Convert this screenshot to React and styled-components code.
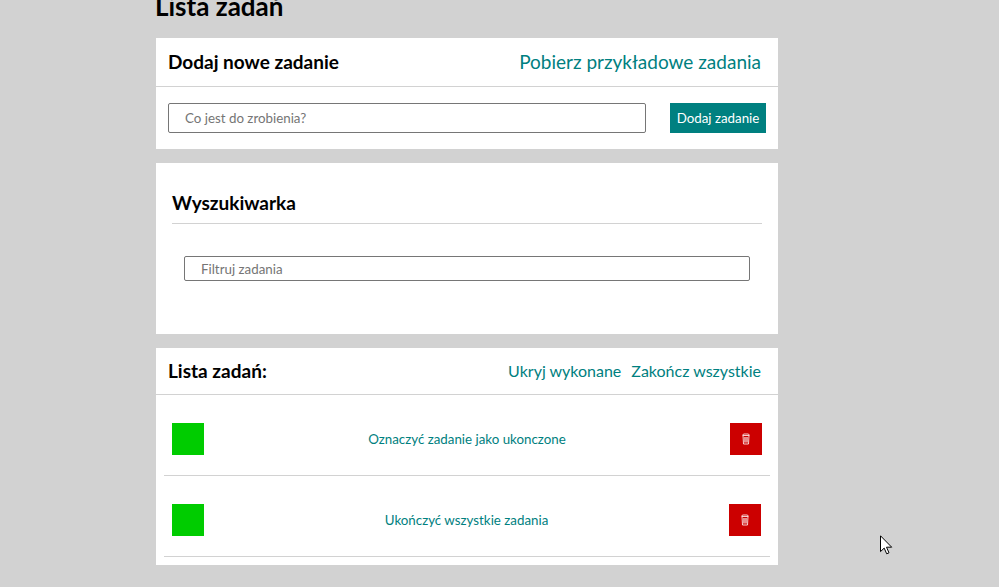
import React from 'react';
import styled, { createGlobalStyle } from 'styled-components';

const GlobalStyle = createGlobalStyle`
  *, *::before, *::after { box-sizing: border-box; }
  html { height: 100%; overflow: hidden; background: #d2d2d2; }
  body { margin: 0; font-family: Lato, sans-serif; color: #000; }
`;

const Page = styled.main`
  width: 622px;
  height: 587px;
  margin-left: 156px;
  overflow: visible;
`;

const Title = styled.h1`
  margin: -11px 0 0 -1px;
  height: 49px;
  font-size: 26px;
  line-height: 34px;
  font-weight: 700;
`;

const Section = styled.section`
  height: ${({ $height }) => $height}px;
  margin-bottom: 14px;
  background: #fff;
  padding: ${({ $pad }) => $pad || 0};
`;

const Header = styled.header`
  display: flex;
  align-items: center;
  justify-content: space-between;
  height: ${({ $height }) => $height}px;
  padding: 0 17px 0 12px;
  border-bottom: 1px solid #d2d2d2;
`;

const Heading = styled.h2`
  margin: 0;
  font-size: 19px;
  line-height: 24px;
  font-weight: 700;
`;

const SearchHeading = styled(Heading)`
  height: 33px;
  border-bottom: 1px solid #d2d2d2;
`;

const Links = styled.div`
  display: flex;
  gap: 10px;
`;

const LinkButton = styled.button`
  padding: 0;
  border: 0;
  background: none;
  color: #008080;
  font-family: inherit;
  font-size: ${({ $size }) => $size}px;
  line-height: 24px;
  white-space: nowrap;
`;

const Form = styled.form`
  display: grid;
  grid-template-columns: 478px 96px;
  gap: 24px;
  padding: 16px 12px;
`;

const Input = styled.input`
  display: block;
  width: 100%;
  height: ${({ $height }) => $height}px;
  padding: 0 16px;
  border: 1px solid #767676;
  border-radius: 2px;
  font: 13.333px Lato, sans-serif;
  &::placeholder { color: #757575; }
`;

const SearchField = styled.div`
  padding: 32px 12px 0;
`;

const AddButton = styled.button`
  height: 30px;
  padding: 0;
  border: 0;
  background: #008080;
  color: #fff;
  font: 13.333px Lato, sans-serif;
`;

const List = styled.ul`
  margin: 0;
  padding: 0 8px;
  list-style: none;
`;

const Row = styled.li`
  display: grid;
  grid-template-columns: 32px 1fr 32px;
  align-items: center;
  height: 81px;
  padding: 8px ${({ $right }) => $right}px 0 8px;
  border-bottom: 1px solid #d2d2d2;
`;

const Square = styled.button`
  display: grid;
  place-items: center;
  width: 32px;
  height: 32px;
  padding: 0;
  border: 0;
  background: ${({ $color }) => $color};
`;

const TaskName = styled.span`
  text-align: center;
  color: #008080;
  font-size: 13.333px;
`;

const Cursor = styled.svg`
  position: absolute;
  left: 880px;
  top: 535px;
`;

const TrashIcon = () => (
  <svg width="8" height="12" viewBox="0 0 8 12" fill="none" stroke="#fff" strokeWidth=".8">
    <path d="M1 2.5h6l-.5 8.5h-5zM.5 2.5 1.5 1h5l1 1.5M2.8 4v5.5M4 4v5.5M5.2 4v5.5" />
  </svg>
);

const tasks = [
  { name: 'Oznaczyć zadanie jako ukonczone', right: 8 },
  { name: 'Ukończyć wszystkie zadania', right: 9 },
];

export default function App() {
  return (
    <>
      <GlobalStyle />
      <Page>
        <Title>Lista zadań</Title>
        <Section $height={111}>
          <Header $height={49}>
            <Heading>Dodaj nowe zadanie</Heading>
            <LinkButton $size={19}>Pobierz przykładowe zadania</LinkButton>
          </Header>
          <Form onSubmit={(e) => e.preventDefault()}>
            <Input $height={30} placeholder="Co jest do zrobienia?" />
            <AddButton>Dodaj zadanie</AddButton>
          </Form>
        </Section>
        <Section $height={171} $pad="28px 16px">
          <SearchHeading>Wyszukiwarka</SearchHeading>
          <SearchField>
            <Input $height={25} placeholder="Filtruj zadania" />
          </SearchField>
        </Section>
        <Section $height={217}>
          <Header $height={47}>
            <Heading>Lista zadań:</Heading>
            <Links>
              <LinkButton $size={16}>Ukryj wykonane</LinkButton>
              <LinkButton $size={16}>Zakończ wszystkie</LinkButton>
            </Links>
          </Header>
          <List>
            {tasks.map((task) => (
              <Row key={task.name} $right={task.right}>
                <Square $color="#00cc00" aria-label="Ukończ" />
                <TaskName>{task.name}</TaskName>
                <Square $color="#cc0000" aria-label="Usuń"><TrashIcon /></Square>
              </Row>
            ))}
          </List>
        </Section>
      </Page>
      <Cursor width="13" height="20" viewBox="0 0 13 20">
        <path d="M.5 .8v15.8l3.7-3.5 2.5 5.7 2.3-1-2.5-5.6h5.2z" fill="#fff" stroke="#000" />
      </Cursor>
    </>
  );
}
